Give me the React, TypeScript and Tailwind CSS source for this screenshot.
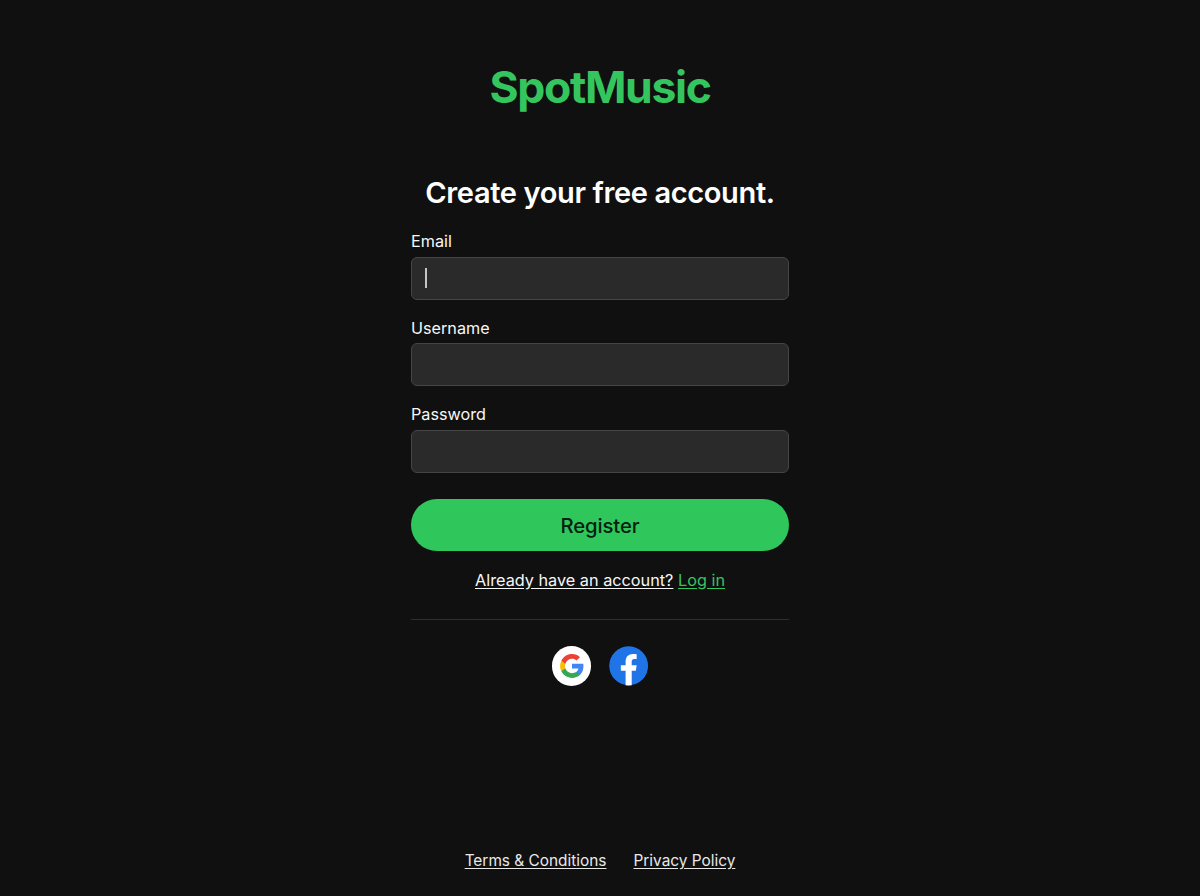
const fields = [
  { id: "email", label: "Email", type: "email" },
  { id: "username", label: "Username", type: "text" },
  { id: "password", label: "Password", type: "password" },
];

const GoogleIcon = () => (
  <svg viewBox="0 0 24 24" className="size-[26px]">
    <path fill="#4285F4" d="M22.56 12.25c0-.78-.07-1.530-.2-2.250H12v4.260h5.920c-.26 1.370-1.040 2.530-2.210 3.310v2.770h3.570c2.080-1.920 3.280-4.740 3.280-8.090z" />
    <path fill="#34A853" d="M12 23c2.970 0 5.460-.98 7.280-2.660l-3.570-2.770c-.98.66-2.230 1.060-3.710 1.060-2.860 0-5.290-1.930-6.160-4.530H2.180v2.840C3.990 20.530 7.700 23 12 23z" />
    <path fill="#FBBC05" d="M5.840 14.090c-.22-.66-.35-1.360-.35-2.090s.13-1.430.35-2.090V7.070H2.180C1.430 8.550 1 10.220 1 12s.43 3.450 1.180 4.930l3.660-2.840z" />
    <path fill="#EA4335" d="M12 5.380c1.620 0 3.060.56 4.210 1.640l3.150-3.150C17.450 2.090 14.970 1 12 1 7.700 1 3.990 3.470 2.180 7.070l3.660 2.840c.87-2.600 3.300-4.530 6.160-4.530z" />
  </svg>
);

const FacebookIcon = () => (
  <svg viewBox="0 0 40 40" className="size-full">
    <circle cx="20" cy="20" r="19.8" fill="#1f74e8" />
    <path
      fill="#fff"
      d="M16.800 40V25H12v-5.500h4.800v-3.700C16.800 10.800 19.600 8 24.300 8c1.400 0 2.700.1 3.700.3v4.900h-2.300c-2 0-2.700 1-2.700 2.700v3.600h5L27.200 25H23v15z"
    />
  </svg>
);

const App = () => {
  return (
    <div className="h-screen bg-[#101010] text-[#f7f7f7] font-['Inter',sans-serif] flex flex-col items-center overflow-hidden">
      <h1 className="mt-[59px] text-[44.5px] leading-[56px] font-bold tracking-[-1.35px] text-[#34c55e]">
        SpotMusic
      </h1>

      <main className="w-[378px] mt-[58px] flex flex-col items-center">
        <h2 className="text-[29px] leading-10 font-semibold tracking-[-0.36px] whitespace-nowrap text-white">
          Create your free account.
        </h2>

        <form className="w-full mt-4">
          {fields.map((field) => (
            <div key={field.id} className="mb-4">
              <label htmlFor={field.id} className="block text-[16.2px] leading-6 mb-[3.5px]">
                {field.label}
              </label>
              {field.id === "email" ? (
                // Focused field with a static caret
                <div className="h-[43px] px-[13px] flex items-center rounded-md border border-[#454545] bg-[#2a2a2a]">
                  <span className="w-0.5 h-5 bg-[#c4c4c4]" />
                </div>
              ) : (
                <input
                  id={field.id}
                  type={field.type}
                  className="block w-full h-[43px] px-[13px] rounded-md border border-[#454545] bg-[#2a2a2a] outline-none"
                />
              )}
            </div>
          ))}

          <button
            type="button"
            className="w-full h-[52.5px] mt-2.5 pt-0.5 rounded-full bg-[#2fc75c] text-[#062010] text-[20.3px] font-medium tracking-[-0.1px]"
          >
            Register
          </button>
        </form>

        <p className="mt-[16.5px] text-[16.25px] leading-6 whitespace-nowrap">
          <a className="underline underline-offset-2">Already have an account?</a>{" "}
          <a className="underline underline-offset-2 text-[#34c55e]">Log in</a>
        </p>

        <hr className="w-full mt-[27px] border-[#2e2e2e]" />

        <div className="flex gap-[17.5px] mt-[26.5px]">
          <button className="size-[39.5px] rounded-full bg-white flex items-center justify-center">
            <GoogleIcon />
          </button>
          <button className="size-[39.5px] rounded-full overflow-hidden">
            <FacebookIcon />
          </button>
        </div>
      </main>

      <footer className="mt-auto mb-[23px] flex gap-[27px] text-[15.4px] leading-6 text-[#e8e8e8]">
        <a className="underline underline-offset-2">Terms &amp; Conditions</a>
        <a className="underline underline-offset-2">Privacy Policy</a>
      </footer>
    </div>
  );
};

export default App;
